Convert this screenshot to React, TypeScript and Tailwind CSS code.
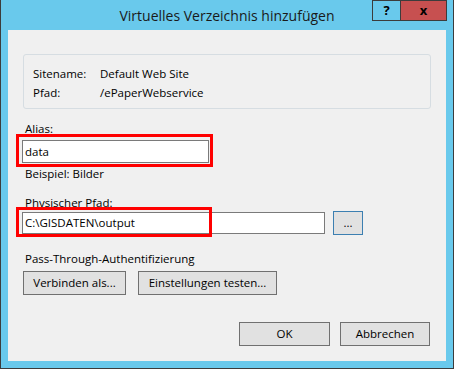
import React from "react";

const font = { fontFamily: '"Open Sans", "Liberation Sans", sans-serif' };

const Btn = ({ label, w, focus }: { label: string; w: string; focus?: boolean }) => (
  <button
    className={`${w} h-[24px] flex items-center justify-center bg-[#e1e1e1] border text-[11.5px] text-black ${
      focus ? "border-[#3c7fb1]" : "border-[#707070]"
    }`}
  >
    {label}
  </button>
);

const App = () => {
  return (
    <div
      className="w-[454px] h-[369px] bg-[#69c9ec] border-l border-r border-b border-[#3c3c3c] flex flex-col text-[11.5px] text-black"
      style={font}
    >
      <div className="h-[30px] relative flex justify-end items-start pr-[6px]">
        <div className="absolute inset-0 flex items-center justify-center text-[14px] text-[#1a1a1a]">
          Virtuelles Verzeichnis hinzufügen
        </div>
        <div className="relative flex h-[21px]">
          <div className="w-[29px] h-full border border-[#3c3c3c] flex items-center justify-center font-bold text-[13px]">
            ?
          </div>
          <div className="w-[46px] h-full bg-[#c75050] border border-l-0 border-[#3c3c3c] flex items-center justify-center font-bold text-[13px]">
            x
          </div>
        </div>
      </div>

      <div className="mx-[7px] h-[331px] bg-[#f0f0f0] relative flex flex-col pl-[15px] pr-[16px]">
        <div className="mt-[24px] w-[408px] h-[55px] border border-[#d6dde2] rounded-[3px] pl-[9px] pt-[9px] leading-[19px]">
          <div className="flex">
            <span className="w-[67px]">Sitename:</span>
            <span>Default Web Site</span>
          </div>
          <div className="flex">
            <span className="w-[67px]">Pfad:</span>
            <span>/ePaperWebservice</span>
          </div>
        </div>

        <div className="mt-[12px] h-[15px] leading-[15px] pl-[2px]">Alias:</div>
        <div className="mt-[4px] ml-[-1px] w-[187px] h-[23px] bg-white border border-[#7a7a7a] flex items-center pl-[2px]">
          data
        </div>
        <div className="mt-[3px] h-[15px] leading-[15px] pl-[2px]">Beispiel: Bilder</div>

        <div className="mt-[14px] h-[15px] leading-[15px] pl-[2px]">Physischer Pfad:</div>
        <div className="mt-[1px] ml-[-1px] h-[24px] flex items-center gap-[8px]">
          <div className="w-[303px] h-[22px] bg-white border border-[#7a7a7a] flex items-center pl-[2px]">
            C:\GISDATEN\output
          </div>
          <Btn label="..." w="w-[30px]" focus />
        </div>

        <div className="mt-[16px] h-[15px] leading-[15px] pl-[2px]">Pass-Through-Authentifizierung</div>
        <div className="mt-[5px] flex gap-[12px]">
          <Btn label="Verbinden als..." w="w-[103px]" />
          <Btn label="Einstellungen testen..." w="w-[139px]" />
        </div>

        <div className="mt-[27px] flex justify-end gap-[10px]">
          <Btn label="OK" w="w-[91px]" />
          <Btn label="Abbrechen" w="w-[90px]" />
        </div>

        <div className="absolute left-[8px] top-[104px] w-[197px] h-[33px] border-[3px] border-[#ff0000]" />
        <div className="absolute left-[8px] top-[177px] w-[196px] h-[30px] border-[3px] border-[#ff0000]" />
      </div>
    </div>
  );
};

export default App;
